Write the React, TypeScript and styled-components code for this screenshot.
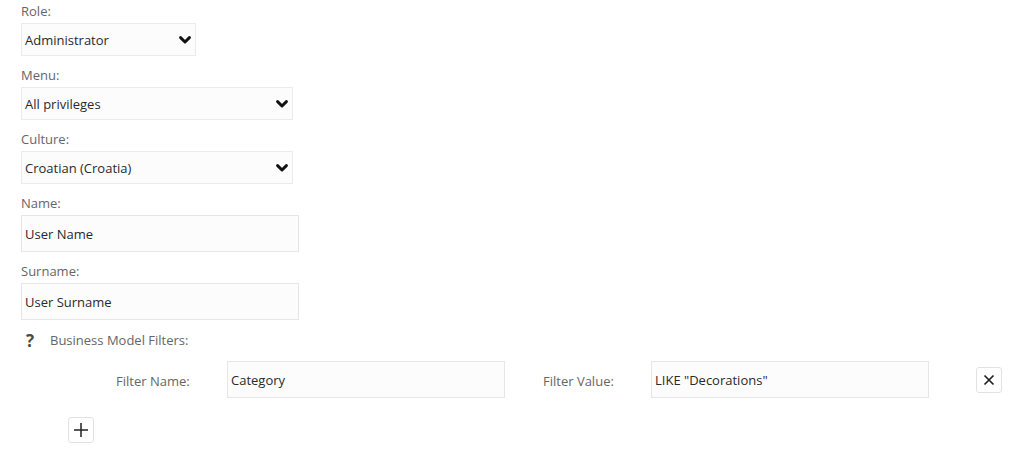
import React from 'react';
import styled, { createGlobalStyle } from 'styled-components';

const GlobalStyle = createGlobalStyle`
  html, body {
    margin: 0;
    padding: 0;
    background: #ffffff;
  }
  body {
    font-family: 'Open Sans', 'Liberation Sans', sans-serif;
    font-size: 13px;
    color: #333;
  }
`;

const Page = styled.div`
  padding: 2px 0 0 21px;
  display: flex;
  flex-direction: column;
`;

const Field = styled.div`
  display: flex;
  flex-direction: column;
  margin-bottom: 10px;
`;

const Label = styled.label`
  height: 18px;
  line-height: 18px;
  margin-bottom: 3px;
  color: #666;
`;

const Select = styled.div<{ $width: number }>`
  box-sizing: border-box;
  width: ${(p) => p.$width}px;
  height: 33px;
  display: flex;
  align-items: center;
  justify-content: space-between;
  padding: 1px 4px 0 3px;
  background: #fcfcfc;
  border: 1px solid #ebebeb;
  color: #2a2a2a;
  font-size: 13px;
`;

const Chevron = () => (
  <svg width="12" height="8" viewBox="0 0 12 8">
    <path d="M1.6 1.6 L6 6 L10.4 1.6" fill="none" stroke="#111" strokeWidth="2.9" strokeLinecap="round" strokeLinejoin="round" />
  </svg>
);

const TextInput = styled.input<{ $width: number }>`
  box-sizing: border-box;
  width: ${(p) => p.$width}px;
  height: 37px;
  padding: 1px 3px 0;
  background: #fcfcfc;
  border: 1px solid #e6e6e6;
  font-family: inherit;
  font-size: 13px;
  color: #2a2a2a;
  outline: none;
`;

const FiltersHeader = styled.div`
  display: flex;
  align-items: center;
  height: 18px;
  margin-top: 11px;
  padding-left: 5px;
  color: #666;
`;

const Help = styled.span`
  font-weight: 700;
  font-size: 17px;
  color: #4a4a4a;
  width: 24px;
`;

const FilterRow = styled.div`
  display: flex;
  align-items: center;
  margin-top: 12px;
  padding-left: 95px;
`;

const FilterLabel = styled.span<{ $width: number }>`
  width: ${(p) => p.$width}px;
  color: #666;
  padding-top: 2px;
`;

const Gap = styled.div<{ $width: number }>`
  width: ${(p) => p.$width}px;
`;

const IconButton = styled.button`
  box-sizing: border-box;
  width: 26px;
  height: 26px;
  padding: 0;
  display: flex;
  align-items: center;
  justify-content: center;
  background: #fff;
  border: 1px solid #e2e2e2;
  border-radius: 3px;
  color: #222;
`;

const AddRow = styled.div`
  margin-top: 19px;
  padding-left: 47px;
`;

const selects = [
  { label: 'Role:', value: 'Administrator', width: 175 },
  { label: 'Menu:', value: 'All privileges', width: 272 },
  { label: 'Culture:', value: 'Croatian (Croatia)', width: 272 },
];

const texts = [
  { label: 'Name:', value: 'User Name' },
  { label: 'Surname:', value: 'User Surname' },
];

export default function App() {
  return (
    <Page>
      <GlobalStyle />
      {selects.map((f) => (
        <Field key={f.label}>
          <Label>{f.label}</Label>
          <Select $width={f.width}>
            <span>{f.value}</span>
            <Chevron />
          </Select>
        </Field>
      ))}
      {texts.map((f, i) => (
        <Field key={f.label} style={i === texts.length - 1 ? { marginBottom: 0 } : undefined}>
          <Label>{f.label}</Label>
          <TextInput $width={278} defaultValue={f.value} />
        </Field>
      ))}
      <FiltersHeader>
        <Help>?</Help>
        <span>Business Model Filters:</span>
      </FiltersHeader>
      <FilterRow>
        <FilterLabel $width={111}>Filter Name:</FilterLabel>
        <TextInput $width={278} defaultValue="Category" />
        <Gap $width={38} />
        <FilterLabel $width={108}>Filter Value:</FilterLabel>
        <TextInput $width={278} defaultValue={'LIKE "Decorations"'} />
        <Gap $width={47} />
        <IconButton>
          <svg width="12" height="12" viewBox="0 0 12 12">
            <path d="M1.5 1.5 L10.5 10.5 M10.5 1.5 L1.5 10.5" stroke="currentColor" strokeWidth="1.7" />
          </svg>
        </IconButton>
      </FilterRow>
      <AddRow>
        <IconButton>
          <svg width="16" height="16" viewBox="0 0 16 16">
            <path d="M8 1 V15 M1 8 H15" stroke="currentColor" strokeWidth="1.5" />
          </svg>
        </IconButton>
      </AddRow>
    </Page>
  );
}
